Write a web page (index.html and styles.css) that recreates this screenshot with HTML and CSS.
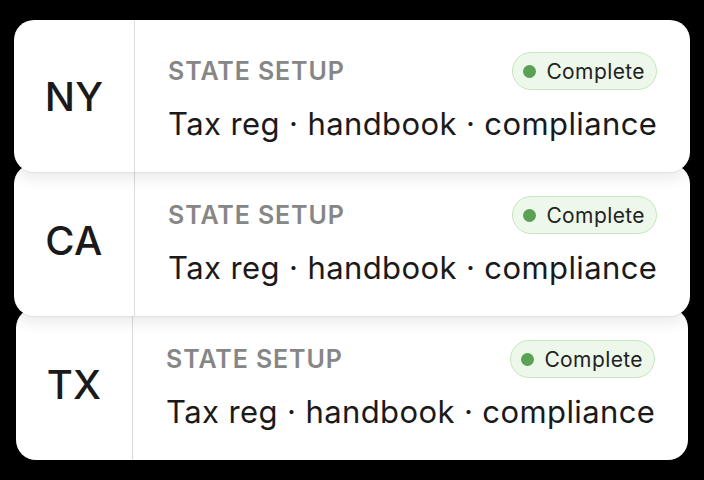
FILE: index.html
```html
<!doctype html>
<html lang="en">
  <head>
    <meta charset="UTF-8" />
    <title>State setup</title>
    <link rel="stylesheet" href="styles.css">
  </head>
  <body>
    <div class="stack">
      <div class="state-card">
        <div class="state-code">NY</div>
        <div class="state-body">
          <div class="state-head">
            <span class="state-label">STATE SETUP</span>
            <span class="status-badge"><span class="status-dot"></span>Complete</span>
          </div>
          <div class="state-tasks">Tax reg · handbook · compliance</div>
        </div>
      </div>

      <div class="state-card">
        <div class="state-code">CA</div>
        <div class="state-body">
          <div class="state-head">
            <span class="state-label">STATE SETUP</span>
            <span class="status-badge"><span class="status-dot"></span>Complete</span>
          </div>
          <div class="state-tasks">Tax reg · handbook · compliance</div>
        </div>
      </div>

      <div class="state-card state-card--back">
        <div class="state-code">TX</div>
        <div class="state-body">
          <div class="state-head">
            <span class="state-label">STATE SETUP</span>
            <span class="status-badge"><span class="status-dot"></span>Complete</span>
          </div>
          <div class="state-tasks">Tax reg · handbook · compliance</div>
        </div>
      </div>
    </div>
  </body>
</html>
```

FILE: styles.css
```css
body {
  margin: 0;
  background: #000;
  font-family: Inter, "Noto Sans", sans-serif;
  color: #1a1a1a;
}

.stack {
  display: flex;
  flex-direction: column;
  padding: 20px 14px 0;
}

.state-card {
  position: relative;
  display: flex;
  height: 152px;
  background: #fff;
  border-radius: 20px;
  box-shadow: 0 1px 0 rgba(0, 0, 0, 0.05), 0 6px 16px rgba(0, 0, 0, 0.09);
}

.state-card + .state-card {
  margin-top: -8px;
}

.state-card:nth-child(1) {
  z-index: 3;
}

.state-card:nth-child(2) {
  z-index: 2;
}

.state-card:nth-child(3) {
  z-index: 1;
}

.state-code {
  flex: 0 0 120px;
  display: flex;
  align-items: center;
  justify-content: center;
  border-right: 1px solid #dcdcdc;
  font-size: 40px;
  font-weight: 500;
  letter-spacing: 0.3px;
}

.state-body {
  flex: 1;
  min-width: 0;
  display: flex;
  flex-direction: column;
  gap: 16px;
  padding: 32px 33px 0 33px;
}

.state-head {
  display: flex;
  align-items: center;
  justify-content: space-between;
  height: 38px;
}

.state-label {
  font-size: 25px;
  font-weight: 600;
  color: #868686;
  letter-spacing: 0.9px;
}

.status-badge {
  display: inline-flex;
  align-items: center;
  gap: 10px;
  height: 38px;
  padding: 0 11px 0 10px;
  box-sizing: border-box;
  border: 1.5px solid #c6e6bc;
  border-radius: 19px;
  background: #eef8ea;
  font-size: 21px;
  letter-spacing: 0.4px;
  color: #222;
}

.status-dot {
  width: 13px;
  height: 13px;
  border-radius: 50%;
  background: #5aa055;
}

.state-tasks {
  font-size: 31px;
  line-height: 36px;
  letter-spacing: 0.4px;
  white-space: nowrap;
  color: #1a1a1a;
}

.state-card--back {
  margin-left: 2px;
  margin-right: 2px;
}

.state-card--back .state-code {
  flex-basis: 116px;
}
```
